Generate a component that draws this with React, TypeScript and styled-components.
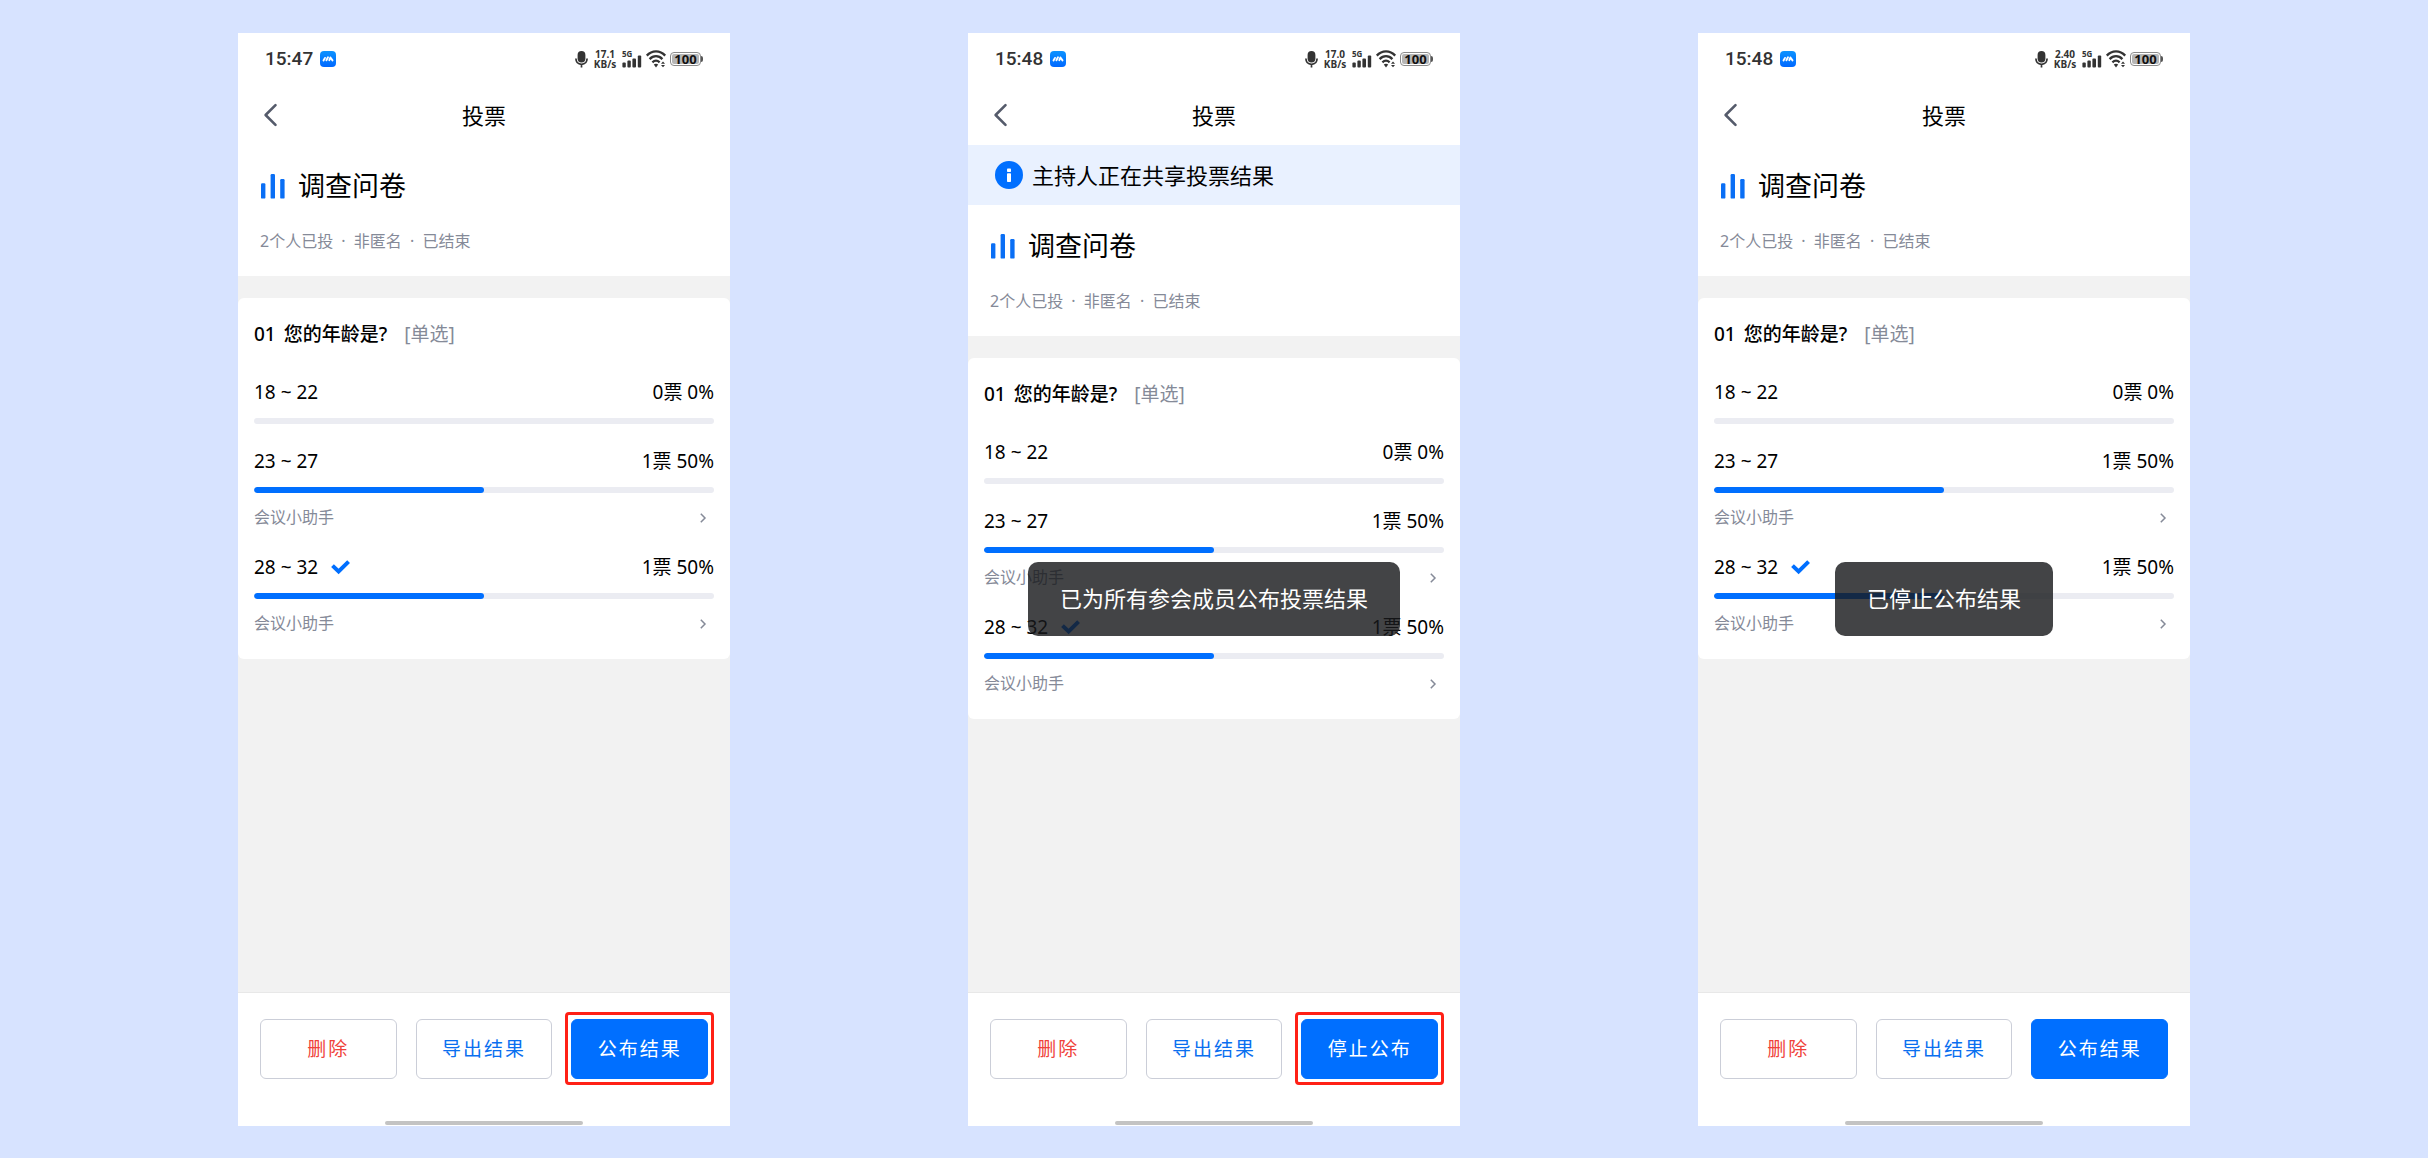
import React from "react";
import styled, { createGlobalStyle, css } from "styled-components";

const color = {
  page: "#d7e3ff",
  blue: "#006fff",
  red: "#f0423a",
  frame: "#ff2016",
  muted: "#858a98",
  surface: "#f2f2f2",
  track: "#ebecf2",
  status: "#333333",
};

const GlobalStyle = createGlobalStyle`
  *, *::before, *::after { box-sizing: border-box; }
  body {
    margin: 0;
    background: ${color.page};
    color: #000;
    font-family: "Noto Sans", "Noto Sans CJK SC", sans-serif;
  }
  h1, h2, h3, p, ul { margin: 0; padding: 0; font-weight: 400; }
  button { font-family: inherit; padding: 0; border: 0; background: none; color: inherit; cursor: pointer; }
  svg { display: block; flex: none; overflow: visible; }
`;

const Board = styled.main`
  display: grid;
  grid-template-columns: repeat(3, minmax(0, 492px));
  justify-content: space-evenly;
  min-height: 100vh;
  padding: 33px 0 32px;
`;

const Phone = styled.section`
  position: relative;
  display: flex;
  flex-direction: column;
  background: ${color.surface};
`;

const StatusBar = styled.div`
  display: flex;
  align-items: center;
  justify-content: space-between;
  height: 52px;
  padding: 0 27px;
  background: #fff;
  color: ${color.status};
`;

const StatusGroup = styled.div<{ $gap: number }>`
  display: flex;
  align-items: center;
  gap: ${(p) => p.$gap}px;
`;

const Clock = styled.time`
  font-family: Roboto, "Noto Sans", sans-serif;
  font-size: 19px;
  line-height: 24px;
  font-weight: 500;
`;

const Speed = styled.span`
  width: 24px;
  margin: 0 1px;
  font-family: "Open Sans", "Noto Sans", sans-serif;
  font-size: 10px;
  line-height: 10px;
  font-weight: 700;
  text-align: center;
`;

const Battery = styled.span`
  display: flex;
  align-items: center;

  &::after {
    content: "";
    width: 2px;
    height: 6px;
    border-radius: 0 2px 2px 0;
    background: #555;
  }
`;

const BatteryShell = styled.span`
  width: 31px;
  height: 14px;
  padding: 1px;
  border: 1px solid #8a8a8a;
  border-radius: 4px;
`;

const BatteryFill = styled.span`
  display: block;
  height: 10px;
  border-radius: 2px;
  background: #b6b6b6;
  color: #111;
  font-family: "Open Sans", "Noto Sans", sans-serif;
  font-size: 13px;
  line-height: 10px;
  font-weight: 700;
  text-align: center;
`;

const NavBar = styled.header`
  display: grid;
  grid-template-columns: 1fr auto 1fr;
  align-items: center;
  height: 60px;
  padding: 0 26px;
  background: #fff;
`;

const BackButton = styled.button`
  justify-self: start;
`;

const NavTitle = styled.h1`
  font-size: 22px;
  line-height: 32px;
`;

const Banner = styled.div`
  display: flex;
  align-items: center;
  gap: 9px;
  height: 60px;
  padding: 0 27px;
  background: #e9f1ff;
  font-size: 22px;
  line-height: 32px;
`;

const Summary = styled.div`
  display: flex;
  flex-direction: column;
  gap: 23px;
  padding: 21px 22px 23px;
  background: #fff;
`;

const SummaryTitle = styled.h2`
  display: flex;
  align-items: center;
  gap: 13px;
  font-size: 27px;
  line-height: 40px;
`;

const Meta = styled.p`
  color: ${color.muted};
  font-size: 16px;
  line-height: 24px;
`;

const Dot = styled.span`
  margin: 0 4px;
`;

const Card = styled.div`
  margin-top: 22px;
  padding: 24px 16px 23px;
  border-radius: 6px;
  background: #fff;
`;

const Question = styled.h3`
  display: flex;
  gap: 8px;
  margin-bottom: 32px;
  font-size: 19px;
  line-height: 24px;
  font-weight: 500;
`;

const Kind = styled.span`
  margin-left: 9px;
  color: ${color.muted};
  font-weight: 400;
`;

const OptionList = styled.ul`
  display: flex;
  flex-direction: column;
  gap: 23px;
  list-style: none;
`;

const Option = styled.li`
  display: flex;
  flex-direction: column;
  gap: 12px;
`;

const OptionLine = styled.div`
  display: flex;
  align-items: center;
  justify-content: space-between;
  font-size: 19px;
  line-height: 28px;
`;

const OptionLabel = styled.span`
  display: flex;
  align-items: center;
  gap: 13px;
`;

const Track = styled.div`
  height: 6px;
  border-radius: 3px;
  background: ${color.track};
  overflow: hidden;
`;

const Fill = styled.div`
  height: 100%;
  border-radius: 3px;
  background: ${color.blue};
`;

const VoterButton = styled.button`
  display: flex;
  align-items: center;
  justify-content: space-between;
  width: 100%;
  padding: 0 8px 0 0;
  color: ${color.muted};
  font-size: 16px;
  line-height: 25px;
`;

const Footer = styled.footer`
  display: flex;
  flex-direction: column;
  justify-content: space-between;
  height: 134px;
  margin-top: auto;
  padding: 26px 22px 1px;
  border-top: 1px solid #e8e8e8;
  background: #fff;
`;

const Actions = styled.div`
  display: grid;
  grid-template-columns: repeat(3, minmax(0, 1fr));
  gap: 19px;
`;

const ActionCell = styled.div`
  position: relative;
`;

const ActionButton = styled.button<{ $kind: "danger" | "outline" | "primary" }>`
  width: 100%;
  height: 60px;
  border: 1px solid #cbced8;
  border-radius: 6px;
  font-size: 19px;
  line-height: 28px;
  letter-spacing: 2px;
  color: ${(p) => (p.$kind === "danger" ? color.red : "#0a6ff0")};

  ${(p) =>
    p.$kind === "primary" &&
    css`
      border-color: ${color.blue};
      background: ${color.blue};
      color: #fff;
    `}
`;

const Highlight = styled.span`
  position: absolute;
  inset: -7px -6px -6px;
  border: 3px solid ${color.frame};
  border-radius: 4px;
  pointer-events: none;
`;

const HomeIndicator = styled.div`
  align-self: center;
  width: 44%;
  height: 4px;
  border-radius: 2px;
  background: #c3c3c3;
`;

const ToastLayer = styled.div`
  position: absolute;
  inset: 39px 0 0;
  display: flex;
  align-items: center;
  justify-content: center;
  pointer-events: none;
`;

const Toast = styled.div`
  padding: 20px 32px 22px;
  border-radius: 10px;
  background: rgba(24, 25, 27, 0.81);
  color: #fff;
  font-size: 22px;
  line-height: 32px;
`;

const MeetingLogo = () => (
  <svg width="16" height="16" viewBox="0 0 16 16" aria-hidden="true">
    <defs>
      <linearGradient id="meeting" x1="0" y1="0" x2="0" y2="1">
        <stop offset="0" stopColor="#0d93ff" />
        <stop offset="1" stopColor="#0068ff" />
      </linearGradient>
    </defs>
    <rect width="16" height="16" rx="4" fill="url(#meeting)" />
    <g fill="none" stroke="#fff" strokeWidth="1.9" strokeLinecap="round" strokeLinejoin="round">
      <path d="M3.5 9.5L5 6.9" />
      <path d="M6.4 9.2L8 6.3" />
      <path d="M9.3 9.2L10.4 6.5L12.5 9.4" />
    </g>
  </svg>
);

const MicIcon = () => (
  <svg width="13" height="18" viewBox="0 0 13 18" aria-hidden="true">
    <rect x="2.6" y="1" width="7.8" height="11.4" rx="3.9" fill="#333" />
    <path d="M.9 8.6C1 12.3 3.3 14.3 6.5 14.3S12 12.3 12.1 8.6M6.5 14.3V17.4" fill="none" stroke="#333" strokeWidth="1.7" />
  </svg>
);

const SignalIcon = () => (
  <svg width="20" height="22" viewBox="0 0 20 22" role="img" aria-label="5G">
    <text x="0" y="9" fontFamily="Open Sans, Noto Sans, sans-serif" fontSize="8" fontWeight="700" fill="#333">
      5G
    </text>
    <g fill="#333">
      <rect x="0.4" y="14.6" width="3.4" height="4.8" rx="1" />
      <rect x="5.4" y="12.6" width="3.4" height="6.8" rx="1" />
      <rect x="10.4" y="10.4" width="3.6" height="9" rx="1" />
      <rect x="15.8" y="7.6" width="3.4" height="11.8" rx="1" />
    </g>
  </svg>
);

const WifiIcon = () => (
  <svg width="20" height="18" viewBox="0 0 20 18" aria-hidden="true">
    <g fill="none" stroke="#333" strokeWidth="2.3">
      <path d="M.8 5.6C6-.1 14-.1 19.2 5.6" />
      <path d="M3.6 9.1C7.3 5.2 12.7 5.2 16.4 9.1" />
      <path d="M6.4 12.4C8.6 10.2 11.4 10.2 13.6 12.4" />
    </g>
    <path d="M7.8 14.6C9 13.6 11 13.6 12.2 14.6L10 17.4Z" fill="#333" />
    <path d="M15 13.8L17 11.6L19 13.8ZM15 15H19L17 17.2Z" fill="#333" />
  </svg>
);

const BackIcon = () => (
  <svg width="13" height="24" viewBox="0 0 13 24" fill="none" aria-hidden="true">
    <path d="M11.5 2.2L1.6 12L11.5 21.8" stroke="#555b6b" strokeWidth="2.6" strokeLinecap="round" strokeLinejoin="round" />
  </svg>
);

const InfoIcon = () => (
  <svg width="28" height="28" viewBox="0 0 28 28" aria-hidden="true">
    <circle cx="14" cy="14" r="14" fill={color.blue} />
    <rect x="12" y="7.4" width="4" height="3.6" rx=".8" fill="#fff" />
    <rect x="12" y="12.2" width="4" height="8.8" rx=".8" fill="#fff" />
  </svg>
);

const PollIcon = () => (
  <svg width="25" height="25" viewBox="0 0 25 25" fill="#0a6ff5" aria-hidden="true">
    <rect x="1" y="9.2" width="4.4" height="15.4" rx="1.2" />
    <rect x="10.6" y="0" width="4.4" height="24.6" rx="1.2" />
    <rect x="20.2" y="5" width="4.4" height="19.6" rx="1.2" />
  </svg>
);

const CheckIcon = () => (
  <svg width="19" height="14" viewBox="0 0 19 14" fill="none" role="img" aria-label="已选">
    <path d="M1.5 5.6L7.6 11.4L17.6 1.6" stroke={color.blue} strokeWidth="4" />
  </svg>
);

const ChevronIcon = () => (
  <svg width="6" height="10" viewBox="0 0 6 10" fill="none" aria-hidden="true">
    <path d="M.8 .7L5 5L.8 9.3" stroke="#858a98" strokeWidth="1.5" />
  </svg>
);

interface Choice {
  label: string;
  votes: number;
  percent: number;
  voter?: string;
  mine?: boolean;
}

const choices: Choice[] = [
  { label: "18 ~ 22", votes: 0, percent: 0 },
  { label: "23 ~ 27", votes: 1, percent: 50, voter: "会议小助手" },
  { label: "28 ~ 32", votes: 1, percent: 50, voter: "会议小助手", mine: true },
];

interface Screen {
  time: string;
  speed: string;
  banner?: string;
  toast?: string;
  action: string;
  highlighted?: boolean;
}

const screens: Screen[] = [
  { time: "15:47", speed: "17.1", action: "公布结果", highlighted: true },
  {
    time: "15:48",
    speed: "17.0",
    banner: "主持人正在共享投票结果",
    toast: "已为所有参会成员公布投票结果",
    action: "停止公布",
    highlighted: true,
  },
  { time: "15:48", speed: "2.40", toast: "已停止公布结果", action: "公布结果" },
];

const ChoiceRow = ({ choice }: { choice: Choice }) => (
  <Option>
    <OptionLine>
      <OptionLabel>
        {choice.label}
        {choice.mine && <CheckIcon />}
      </OptionLabel>
      <span>
        {choice.votes}票 {choice.percent}%
      </span>
    </OptionLine>
    <Track role="progressbar" aria-label={choice.label} aria-valuenow={choice.percent}>
      <Fill style={{ width: `${choice.percent}%` }} />
    </Track>
    {choice.voter && (
      <VoterButton type="button">
        {choice.voter}
        <ChevronIcon />
      </VoterButton>
    )}
  </Option>
);

const PollScreen = ({ screen }: { screen: Screen }) => (
  <Phone>
    <StatusBar>
      <StatusGroup $gap={7}>
        <Clock>{screen.time}</Clock>
        <MeetingLogo />
      </StatusGroup>
      <StatusGroup $gap={4}>
        <MicIcon />
        <Speed>
          {screen.speed}
          <br />
          KB/s
        </Speed>
        <SignalIcon />
        <WifiIcon />
        <Battery>
          <BatteryShell>
            <BatteryFill>100</BatteryFill>
          </BatteryShell>
        </Battery>
      </StatusGroup>
    </StatusBar>
    <NavBar>
      <BackButton type="button" aria-label="返回">
        <BackIcon />
      </BackButton>
      <NavTitle>投票</NavTitle>
    </NavBar>
    {screen.banner && (
      <Banner>
        <InfoIcon />
        {screen.banner}
      </Banner>
    )}
    <Summary>
      <SummaryTitle>
        <PollIcon />
        调查问卷
      </SummaryTitle>
      <Meta>
        2个人已投 <Dot>·</Dot> 非匿名 <Dot>·</Dot> 已结束
      </Meta>
    </Summary>
    <Card>
      <Question>
        <span>01</span>
        <span>您的年龄是?</span>
        <Kind>[单选]</Kind>
      </Question>
      <OptionList>
        {choices.map((choice) => (
          <ChoiceRow key={choice.label} choice={choice} />
        ))}
      </OptionList>
    </Card>
    <Footer>
      <Actions>
        <ActionButton type="button" $kind="danger">
          删除
        </ActionButton>
        <ActionButton type="button" $kind="outline">
          导出结果
        </ActionButton>
        <ActionCell>
          <ActionButton type="button" $kind="primary">
            {screen.action}
          </ActionButton>
          {screen.highlighted && <Highlight />}
        </ActionCell>
      </Actions>
      <HomeIndicator />
    </Footer>
    {screen.toast && (
      <ToastLayer>
        <Toast role="status">{screen.toast}</Toast>
      </ToastLayer>
    )}
  </Phone>
);

export default function App() {
  return (
    <>
      <GlobalStyle />
      <Board>
        {screens.map((screen, index) => (
          <PollScreen key={index} screen={screen} />
        ))}
      </Board>
    </>
  );
}
